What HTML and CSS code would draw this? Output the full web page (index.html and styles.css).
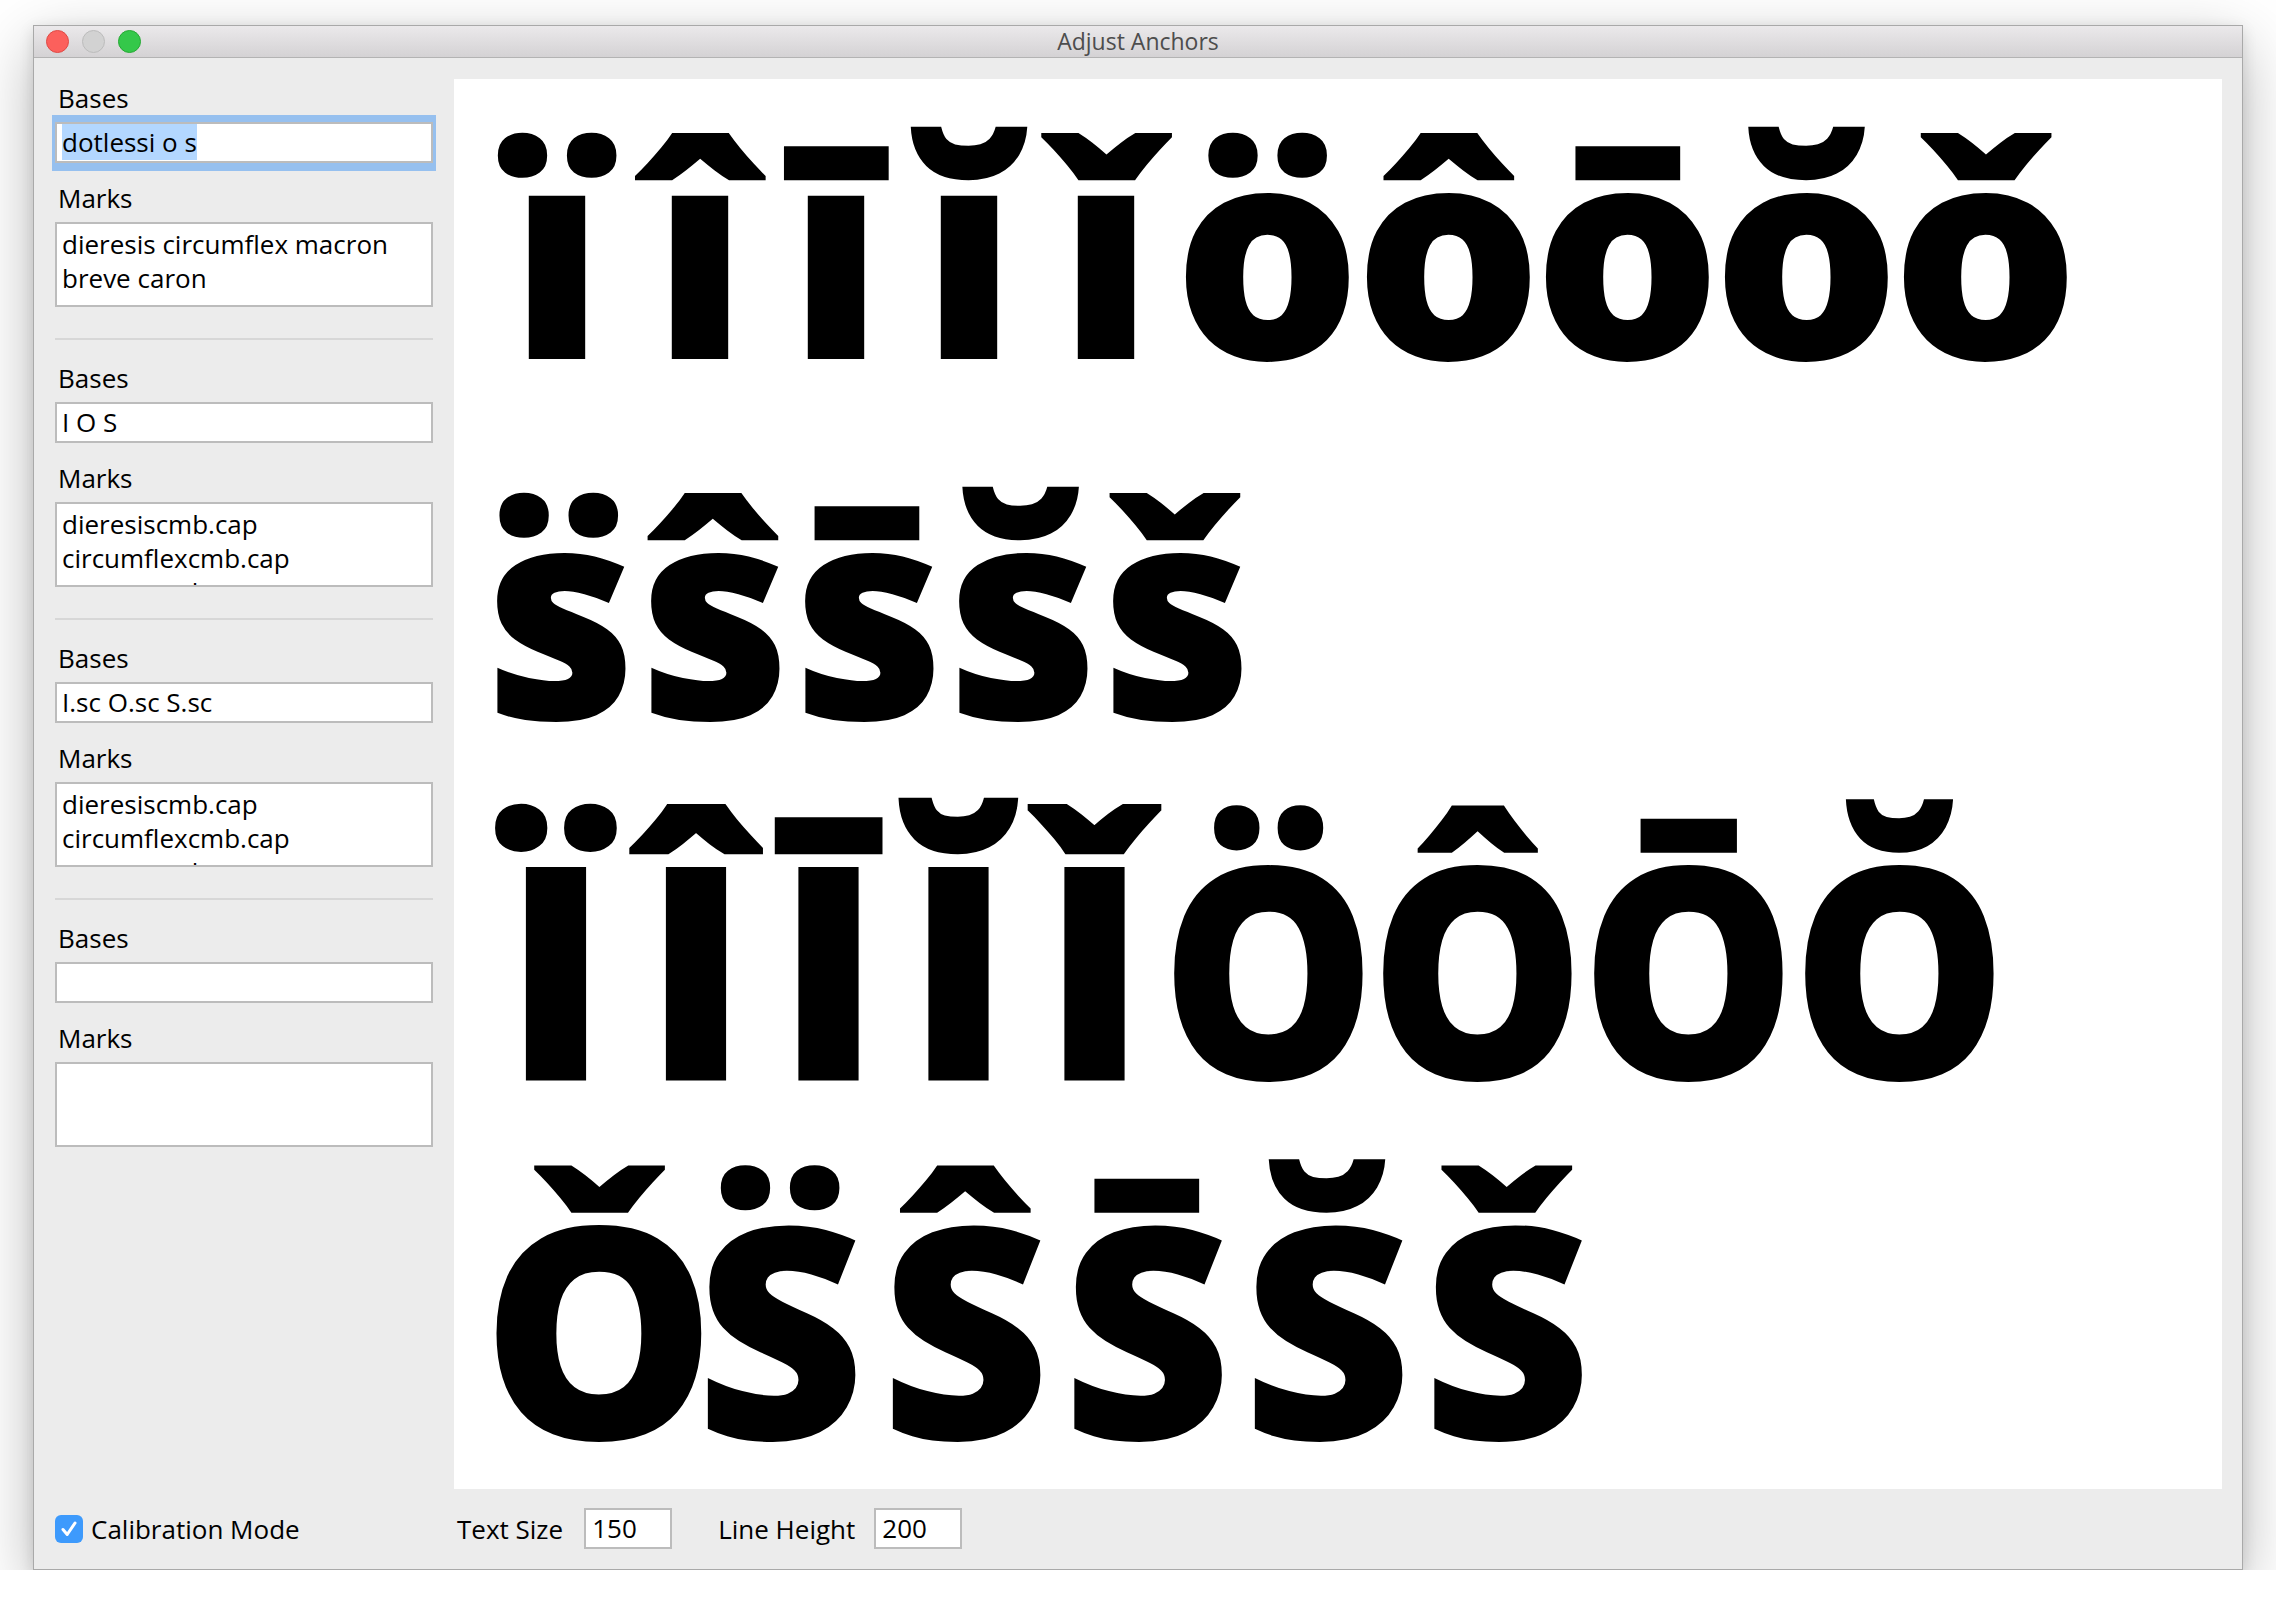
FILE: index.html
```html
<!DOCTYPE html>
<html>
<head>
<meta charset="utf-8">
<title>Adjust Anchors</title>
<link rel="stylesheet" href="styles.css">
</head>
<body>
<div class="window">
  <div class="titlebar">
    <div class="lights">
      <span class="light red"></span>
      <span class="light gray"></span>
      <span class="light green"></span>
    </div>
    <div class="title">Adjust Anchors</div>
    <div class="spacer"></div>
  </div>
  <div class="main">
    <div class="sidebar">
      <div class="group">
        <div class="label">Bases</div>
        <div class="field focused"><span class="sel">dotlessi o s</span></div>
        <div class="label">Marks</div>
        <div class="area">dieresis circumflex macron breve caron</div>
      </div>
      <div class="sep"></div>
      <div class="group">
        <div class="label">Bases</div>
        <div class="field">I O S</div>
        <div class="label">Marks</div>
        <div class="area">dieresiscmb.cap<br>circumflexcmb.cap<br>macroncmb.cap</div>
      </div>
      <div class="sep"></div>
      <div class="group">
        <div class="label">Bases</div>
        <div class="field">I.sc O.sc S.sc</div>
        <div class="label">Marks</div>
        <div class="area">dieresiscmb.cap<br>circumflexcmb.cap<br>macroncmb.cap</div>
      </div>
      <div class="sep"></div>
      <div class="group">
        <div class="label">Bases</div>
        <div class="field"></div>
        <div class="label">Marks</div>
        <div class="area"></div>
      </div>
    </div>
    <div class="canvas">
      <div class="row r1">
        <span class="g">ï</span><span class="g">î</span><span class="g">ī</span><span class="g">ĭ</span><span class="g">ǐ</span><span class="g">ö</span><span class="g">ô</span><span class="g">ō</span><span class="g">ŏ</span><span class="g">ǒ</span>
      </div>
      <div class="row r2">
        <span class="g">s̈</span><span class="g">ŝ</span><span class="g">s̄</span><span class="g">s̆</span><span class="g">š</span>
      </div>
      <div class="row r3">
        <span class="g cap-i">Ï</span><span class="g cap-i">Î</span><span class="g cap-i">Ī</span><span class="g cap-i">Ĭ</span><span class="g cap-i">Ǐ</span><span class="g cap-o">Ö</span><span class="g cap-o">Ô</span><span class="g cap-o">Ō</span><span class="g cap-o">Ŏ</span>
      </div>
      <div class="row r4">
        <span class="g first-o">Ǒ</span><span class="g">S̈</span><span class="g">Ŝ</span><span class="g">S̄</span><span class="g">S̆</span><span class="g">Š</span>
      </div>
    </div>
  </div>
  <div class="bottombar">
    <div class="calib">
      <span class="checkbox"><svg viewBox="0 0 28 28" width="28" height="28"><path d="M8 14.5 L12.2 19.5 L20 8" fill="none" stroke="#fff" stroke-width="3" stroke-linecap="round" stroke-linejoin="round"/></svg></span>
      <span class="ctl-label">Calibration Mode</span>
    </div>
    <span class="ctl-label ts">Text Size</span>
    <span class="num">150</span>
    <span class="ctl-label lh">Line Height</span>
    <span class="num">200</span>
  </div>
</div>
</body>
</html>
```
FILE: styles.css
```css
html, body {
  margin: 0;
  padding: 0;
  background: #ffffff;
}
body {
  padding: 25px 0 0 33px;
  font-family: "Open Sans", "DejaVu Sans", sans-serif;
  color: #000;
}
.window {
  box-sizing: border-box;
  width: 2210px;
  height: 1545px;
  background: #ececec;
  border: 1px solid #a9a9a9;
  box-shadow: 0 20px 60px rgba(0, 0, 0, 0.28), 0 4px 14px rgba(0, 0, 0, 0.12);
  display: flex;
  flex-direction: column;
}
.titlebar {
  height: 31px;
  flex: none;
  border-bottom: 1px solid #b3b3b3;
  background: linear-gradient(#ebe9eb, #d4d2d4);
  display: grid;
  grid-template-columns: 1fr auto 1fr;
  align-items: center;
}
.lights {
  display: flex;
  gap: 13px;
  padding-left: 12px;
}
.light {
  box-sizing: border-box;
  width: 23px;
  height: 23px;
  border-radius: 50%;
  display: block;
}
.red { background: #fc605c; border: 1px solid #df4a45; }
.gray { background: #d2d2d2; border: 1px solid #bcbcbc; }
.green { background: #34c84a; border: 1px solid #26a934; }
.title {
  font-size: 23px;
  color: #4d4d4d;
  line-height: 31px;
}
.main {
  flex: 1;
  display: flex;
  gap: 21px;
  padding: 21px 20px 0 21px;
  min-height: 0;
}
.sidebar {
  width: 378px;
  flex: none;
  padding-top: 4px;
}
.label {
  height: 30px;
  line-height: 30px;
  font-size: 26px;
  padding-left: 3px;
  white-space: nowrap;
}
.field {
  box-sizing: border-box;
  height: 41px;
  margin: 9px 0 20px;
  background: #fff;
  border: 2px solid #bcbcbc;
  padding: 0 5px;
  font-size: 26px;
  line-height: 37px;
  white-space: nowrap;
  overflow: hidden;
}
.field.focused {
  box-shadow: 0 -4px 0 3px #96c0ef, 0 5px 0 3px #96c0ef;
  overflow: visible;
}
.sel {
  background: #b3d7ff;
}
.area {
  box-sizing: border-box;
  height: 85px;
  margin-top: 9px;
  background: #fff;
  border: 2px solid #bcbcbc;
  padding: 3px 5px 0;
  font-size: 26px;
  line-height: 34px;
  overflow: hidden;
}
.sep {
  height: 2px;
  background: #d7d7d7;
  margin: 31px 0 23px;
}
.canvas {
  flex: 1;
  height: 1410px;
  background: #fff;
  overflow: hidden;
  box-sizing: border-box;
  padding: 18px 0 0 30px;
}
.row {
  display: flex;
  height: 360px;
  align-items: baseline;
}
.g {
  flex: none;
  display: flex;
  justify-content: center;
  font-family: "Noto Sans", "Open Sans", sans-serif;
  font-weight: 900;
  font-size: 295px;
  line-height: 1;
  color: #000;
}
.cap-i {
  font-family: "Open Sans", "Noto Sans", sans-serif;
  font-weight: 800;
  -webkit-text-stroke: 3px #000;
}
.cap-o {
  transform: scaleX(0.92);
}
.first-o {
  box-sizing: border-box;
  padding-left: 28px;
}
.r1 .g:nth-child(1) { width: 146px; }
.r1 .g:nth-child(2) { width: 140px; }
.r1 .g:nth-child(3) { width: 132px; }
.r1 .g:nth-child(4) { width: 134px; }
.r1 .g:nth-child(5) { width: 140px; }
.r1 .g:nth-child(6) { width: 183px; }
.r1 .g:nth-child(n+7) { width: 179px; }
.r2 .g { width: 154px; }
.r3 .g:nth-child(1) { width: 144px; }
.r3 .g:nth-child(2) { width: 136px; }
.r3 .g:nth-child(3) { width: 129px; }
.r3 .g:nth-child(4) { width: 131px; }
.r3 .g:nth-child(5) { width: 141px; }
.r3 .g:nth-child(6) { width: 207px; }
.r3 .g:nth-child(n+7) { width: 211px; }
.r4 .g:nth-child(1) { width: 202px; }
.r4 .g:nth-child(2) { width: 188px; }
.r4 .g:nth-child(3) { width: 182px; }
.r4 .g:nth-child(4) { width: 181px; }
.r4 .g:nth-child(5) { width: 180px; }
.r4 .g:nth-child(6) { width: 179px; }
.bottombar {
  height: 81px;
  flex: none;
  display: flex;
  align-items: center;
  padding-left: 21px;
}
.calib {
  width: 399px;
  display: flex;
  align-items: center;
  gap: 8px;
}
.checkbox {
  width: 28px;
  height: 28px;
  border-radius: 6px;
  background: #3d9afc;
  display: block;
}
.checkbox svg { display: block; }
.ctl-label {
  font-size: 26px;
  line-height: 30px;
  white-space: nowrap;
}
.ts { margin-left: 3px; margin-right: 21px; }
.lh { margin-left: 46px; margin-right: 19px; }
.num {
  box-sizing: border-box;
  width: 88px;
  height: 41px;
  background: #fff;
  border: 2px solid #bcbcbc;
  padding: 0 6px;
  font-size: 26px;
  line-height: 37px;
}
```
